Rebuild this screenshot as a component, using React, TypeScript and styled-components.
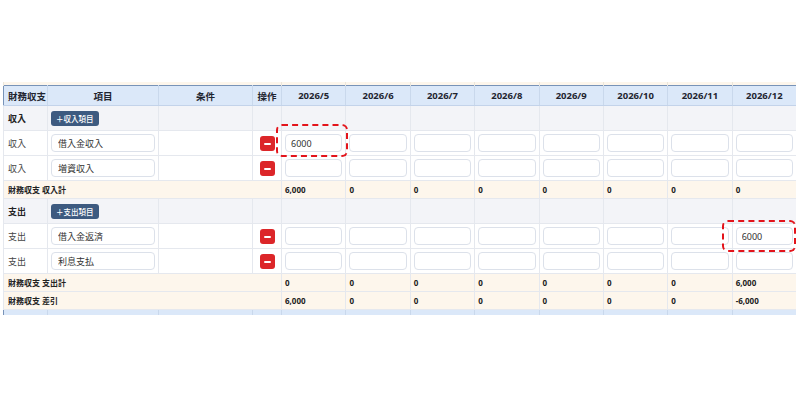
import React from 'react';
import styled, { createGlobalStyle } from 'styled-components';

const months = ['2026/5', '2026/6', '2026/7', '2026/8', '2026/9', '2026/10', '2026/11', '2026/12'];

type ItemRow = { label: string; name: string; values: Record<number, string> };

const incomeRows: ItemRow[] = [
  { label: '収入', name: '借入金収入', values: { 0: '6000' } },
  { label: '収入', name: '増資収入', values: {} }
];
const expenseRows: ItemRow[] = [
  { label: '支出', name: '借入金返済', values: { 7: '6000' } },
  { label: '支出', name: '利息支払', values: {} }
];

const incomeTotal = ['6,000', '0', '0', '0', '0', '0', '0', '0'];
const expenseTotal = ['0', '0', '0', '0', '0', '0', '0', '6,000'];
const diffTotal = ['6,000', '0', '0', '0', '0', '0', '0', '-6,000'];

const GlobalStyle = createGlobalStyle`
  body {
    margin: 0;
    background: #ffffff;
    font-family: "Noto Sans", "Noto Sans CJK JP", sans-serif;
    color: #222;
  }
`;

const Page = styled.div`
  width: 800px;
  height: 400px;
  overflow: hidden;
  padding-top: 82px;
  padding-left: 3px;
  box-sizing: border-box;
`;

const Frame = styled.div`
  position: relative;
  width: 793px;
  overflow: hidden;
`;

const Table = styled.table`
  width: 793px;
  table-layout: fixed;
  border-collapse: collapse;
  font-size: 9px;
`;

const PartialRow = styled.tr`
  td {
    height: 3px;
    padding: 0;
    line-height: 0;
    background: #fdf6ec;
    border-left: 1px solid #ebe6dc;
  }
`;

// the next block's header, cut off by the bottom of the screenshot
const TailRow = styled.tr`
  border-top: 1px solid #7893b8;
  border-left: 1px solid #7893b8;
  td {
    height: 5px;
    padding: 0;
    line-height: 0;
    background: #dbe8f9;
    border-right: 1px solid #c9d8ec;
  }
`;

const HeadRow = styled.tr`
  background: #dbe8f9;
  border-top: 1px solid #7893b8;
  border-left: 1px solid #7893b8;
`;

const Th = styled.th<{ $left?: boolean }>`
  height: 19px;
  padding: 0 4px;
  font-size: 9.5px;
  font-weight: 700;
  color: #1f2530;
  text-align: ${p => (p.$left ? 'left' : 'center')};
  border-right: 1px solid #c9d8ec;
  border-bottom: 1px solid #c3d3ea;
  white-space: nowrap;
`;

const SectionRow = styled.tr`
  background: #f3f4f8;
  td {
    height: 24px;
  }
`;

const ItemRowTr = styled.tr`
  background: #ffffff;
  td {
    height: 24px;
  }
`;

const TotalRow = styled.tr`
  background: #fdf6ec;
  td {
    height: 17px;
    font-size: 8px;
    font-weight: 700;
    color: #222;
  }
`;

const Td = styled.td<{ $bold?: boolean; $center?: boolean; $pad?: number }>`
  padding: 0 ${p => (p.$pad ?? 3)}px;
  border: 1px solid #e5e8ee;
  vertical-align: middle;
  font-weight: ${p => (p.$bold ? 700 : 400)};
  text-align: ${p => (p.$center ? 'center' : 'left')};
  color: ${p => (p.$bold ? '#222' : '#444')};
  white-space: nowrap;
`;

const TextInput = styled.input<{ $pad?: number }>`
  display: block;
  width: 100%;
  height: 18px;
  box-sizing: border-box;
  border: 1px solid #dce1ea;
  border-radius: 4px;
  background: #fff;
  padding: 0 ${p => (p.$pad ?? 5)}px;
  font-family: "Noto Sans", "Noto Sans CJK JP", sans-serif;
  font-size: 9px;
  color: #333;
  outline: none;
`;

const AddButton = styled.button`
  display: inline-flex;
  align-items: center;
  height: 15px;
  padding: 0 5px;
  border: none;
  border-radius: 3px;
  background: #3d5a80;
  color: #fff;
  font-family: "Noto Sans", "Noto Sans CJK JP", sans-serif;
  font-size: 7.5px;
  font-weight: 500;
`;

const MinusButton = styled.button`
  display: inline-flex;
  align-items: center;
  justify-content: center;
  width: 15px;
  height: 15px;
  padding: 0;
  border: none;
  border-radius: 3px;
  background: #dc2629;
  &::after {
    content: '';
    width: 7px;
    height: 1.5px;
    background: #fff;
    border-radius: 1px;
  }
`;

const Highlight = styled.div<{ $x: number; $y: number; $w: number; $h: number }>`
  position: absolute;
  left: ${p => p.$x}px;
  top: ${p => p.$y}px;
  width: ${p => p.$w}px;
  height: ${p => p.$h}px;
  box-sizing: border-box;
  border: 2px dashed #e3141b;
  border-radius: 6px;
  pointer-events: none;
`;

const Section = ({ label, button, rows }: { label: string; button: string; rows: ItemRow[] }) => (
  <>
    <SectionRow>
      <Td $bold $pad={4}>{label}</Td>
      <Td><AddButton>＋{button}</AddButton></Td>
      <Td />
      <Td />
      {months.map(m => <Td key={m} />)}
    </SectionRow>
    {rows.map(r => (
      <ItemRowTr key={r.name}>
        <Td $pad={4}>{r.label}</Td>
        <Td><TextInput $pad={6} defaultValue={r.name} /></Td>
        <Td />
        <Td $center $pad={0}><MinusButton /></Td>
        {months.map((m, i) => (
          <Td key={m}><TextInput defaultValue={r.values[i] ?? ''} /></Td>
        ))}
      </ItemRowTr>
    ))}
  </>
);

const Total = ({ label, values }: { label: string; values: string[] }) => (
  <TotalRow>
    <Td colSpan={4} $bold $pad={4}>{label}</Td>
    {values.map((v, i) => <Td key={i} $bold>{v}</Td>)}
  </TotalRow>
);

const App = () => {
  const monthWidth = (793 - 278) / months.length;
  return (
    <Page>
      <GlobalStyle />
      <Frame>
        <Table>
          <colgroup>
            <col style={{ width: 44 }} />
            <col style={{ width: 111 }} />
            <col style={{ width: 94 }} />
            <col style={{ width: 29 }} />
            {months.map(m => <col key={m} style={{ width: monthWidth }} />)}
          </colgroup>
          <tbody>
            <PartialRow>
              <td colSpan={4} />
              {months.map(m => <td key={m} />)}
            </PartialRow>
            <HeadRow>
              <Th $left>財務収支</Th>
              <Th>項目</Th>
              <Th>条件</Th>
              <Th>操作</Th>
              {months.map(m => <Th key={m}>{m}</Th>)}
            </HeadRow>
            <Section label="収入" button="収入項目" rows={incomeRows} />
            <Total label="財務収支 収入計" values={incomeTotal} />
            <Section label="支出" button="支出項目" rows={expenseRows} />
            <Total label="財務収支 支出計" values={expenseTotal} />
            <Total label="財務収支 差引" values={diffTotal} />
            <TailRow>
              <td />
              <td />
              <td />
              <td />
              {months.map(m => <td key={m} />)}
            </TailRow>
          </tbody>
        </Table>
        <Highlight $x={273} $y={42} $w={72} $h={33} />
        <Highlight $x={719} $y={138} $w={74} $h={32} />
      </Frame>
    </Page>
  );
};

export default App;
